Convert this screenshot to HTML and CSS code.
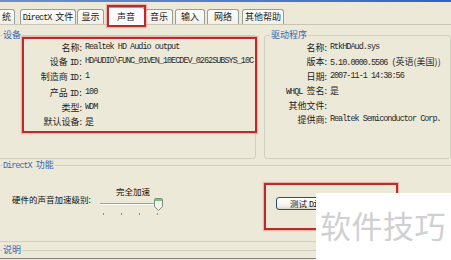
FILE: index.html
```html
<!DOCTYPE html>
<html lang="zh-CN">
<head>
<meta charset="utf-8">
<title>DirectX 诊断工具 - 声音</title>
<link rel="stylesheet" href="styles.css">
</head>
<body>
<div class="topbar"></div>
<div class="tabs">
  <div class="tab t1">统</div>
  <div class="tab t2"><span class="lat sp">DirectX</span>文件</div>
  <div class="tab t3">显示</div>
  <div class="tab sel t4">声音</div>
  <div class="tab t5">音乐</div>
  <div class="tab t6">输入</div>
  <div class="tab t7">网络</div>
  <div class="tab t8">其他帮助</div>
</div>
<div class="pane">
  <div class="groups">
    <section class="group dev">
      <div class="gtitle">设备</div>
      <dl class="rows">
        <dt>名称:</dt><dd class="lat">Realtek HD Audio output</dd>
        <dt>设备 <span class="lat">ID:</span></dt><dd class="lat">HDAUDIO\FUNC_01VEN_10ECDEV_0262SUBSYS_10C</dd>
        <dt>制造商 <span class="lat">ID:</span></dt><dd class="lat">1</dd>
        <dt>产品 <span class="lat">ID:</span></dt><dd class="lat">100</dd>
        <dt>类型:</dt><dd class="lat">WDM</dd>
        <dt>默认设备:</dt><dd>是</dd>
      </dl>
    </section>
    <section class="group drv">
      <div class="gtitle">驱动程序</div>
      <dl class="rows">
        <dt>名称:</dt><dd class="lat">RtkHDAud.sys</dd>
        <dt>版本:</dt><dd><span class="lat">5.10.0000.5506 (</span>英语(美国))</dd>
        <dt>日期:</dt><dd class="lat">2007-11-1 14:38:56</dd>
        <dt><span class="lat sp">WHQL</span>签名:</dt><dd>是</dd>
        <dt>其他文件:</dt><dd></dd>
        <dt>提供商:</dt><dd class="lat">Realtek Semiconductor Corp.</dd>
      </dl>
    </section>
  </div>
  <section class="group dx">
    <div class="gtitle"><span class="lat sp">DirectX</span>功能</div>
    <div class="dx-body">
      <div class="hw-label">硬件的声音加速级别:</div>
      <div class="slider-block">
        <div class="slider-cap">完全加速</div>
        <div class="track"></div>
        <svg class="thumb" width="9" height="13" viewBox="0 0 9 13">
          <path d="M0.5 1.5 Q0.5 0.5 1.5 0.5 H7.5 Q8.5 0.5 8.5 1.5 V8.5 L4.5 12.5 L0.5 8.5 Z" fill="#F3F3EE" stroke="#7F8A80"/>
          <rect x="1" y="1" width="7" height="2" fill="#6FCB6A"/>
        </svg>
        <div class="ticks"><i></i><i></i><i></i><i></i></div>
      </div>
      <button class="btn">测试 <span class="lat">DirectSound(T)</span></button>
    </div>
  </section>
  <section class="group notes">
    <div class="gtitle">说明</div>
    <div class="notebox"></div>
  </section>
</div>
<div class="mark mark-tab"></div>
<div class="mark mark-dev"></div>
<div class="mark mark-btn"></div>
<div class="watermark">软件技巧</div>
</body>
</html>
```
FILE: styles.css
```css
* { box-sizing: border-box; }
html, body { margin: 0; padding: 0; }
html { overflow: hidden; }
body {
  width: 451px;
  height: 260px;
  overflow: hidden;
  position: relative;
  background: #ECE9D8;
  font-family: "Noto Sans CJK SC", "Liberation Sans", sans-serif;
  font-size: 9px;
  color: #1E1E1E;
}
.lat {
  font-family: "Liberation Mono", "Noto Sans CJK SC", monospace;
  font-size: 8.5px;
  letter-spacing: -1px;
}
.lat.sp { margin-right: 4px; }
.topbar {
  height: 2px;
  background: linear-gradient(90deg, #6F8FC8, #4A74C4 70%, #3060C0);
}
.tabs {
  display: flex;
  align-items: flex-end;
  margin-top: 4px;
  height: 19px;
  border-bottom: 1px solid #C9C6B6;
}
.tab {
  height: 15px;
  line-height: 14px;
  text-align: center;
  white-space: nowrap;
  border: 1px solid #9A9E9A;
  border-bottom: none;
  border-radius: 3px 3px 0 0;
  background: linear-gradient(#FDFDFB, #F1EFE6);
  color: #222;
}
.tab.sel {
  height: 18px;
  background: #FCFCFE;
  margin-bottom: -1px;
  line-height: 17px;
}
.t1 { margin-left: -10px; width: 25px; text-align: right; padding-right: 3px; }
.t2 { margin-left: 5px; width: 56px; }
.t3 { margin-left: 1px; width: 27px; }
.t4 { margin-left: 3px; width: 38px; }
.t5 { margin-left: 0; width: 28px; }
.t6 { margin-left: 2px; width: 30px; }
.t7 { margin-left: 2px; width: 32px; }
.t8 { margin-left: 3px; width: 42px; }

.groups {
  display: flex;
  margin-top: 10px;
}
.group {
  border: 1px solid #D0D0BF;
  border-radius: 3px;
}
.gtitle {
  display: table;
  height: 10px;
  line-height: 10px;
  margin: -6px 0 0 5px;
  padding: 0 1px;
  background: #ECE9D8;
  color: #3A66B0;
}
.dev {
  margin-left: -4px;
  width: 264px;
  height: 124px;
}
.drv {
  margin-left: 8px;
  width: 190px;
  height: 124px;
}
.rows {
  display: grid;
  column-gap: 3px;
  margin: 1px 0 0;
  line-height: 13.5px;
}
.dev .rows { grid-template-columns: 85px 169px; }
.drv .rows { grid-template-columns: 62px 120px; }
.rows dt {
  text-align: right;
  white-space: nowrap;
}
.rows dd {
  margin: 0;
  white-space: nowrap;
  overflow: hidden;
  color: #2A2A2A;
}

.dx {
  margin: 6px 0 0 -4px;
  width: 460px;
  height: 77px;
}
.dx-body {
  display: flex;
  align-items: flex-start;
  padding-top: 15px;
  font-size: 8.5px;
  color: #111;
}
.hw-label {
  margin: 8px 0 0 15px;
  width: 86px;
  line-height: 10px;
  white-space: nowrap;
}
.slider-block {
  position: relative;
  width: 70px;
}
.slider-cap {
  text-align: center;
  line-height: 10px;
}
.track {
  margin: 7px 0 0 2px;
  width: 60px;
  height: 2px;
  border-top: 1px solid #A19F97;
  border-bottom: 1px solid #FFFFFF;
}
.thumb {
  position: absolute;
  left: 56px;
  top: 12px;
}
.ticks {
  display: flex;
  gap: 17px;
  margin: 8px 0 0 5px;
}
.ticks i {
  display: block;
  width: 1px;
  height: 2px;
  background: #8E8E88;
}
.btn {
  margin: 11px 0 0 108px;
  width: 110px;
  height: 13px;
  padding: 0 0 0 13px;
  text-align: left;
  line-height: 11px;
  white-space: nowrap;
  border: 1px solid #2C4C74;
  border-radius: 3px;
  background: linear-gradient(#FFFFFF, #F1F0EA 75%, #D8D4C8);
  font-family: "Noto Sans CJK SC", sans-serif;
  font-size: 8.5px;
  color: #111;
}
.notes {
  margin: 8px 0 0 -4px;
  width: 460px;
  height: 10px;
  border-bottom: none;
  border-radius: 3px 3px 0 0;
}
.notebox {
  margin: 3px 0 0 3px;
  height: 1px;
  border-top: 1px solid #85847C;
}

.mark {
  position: absolute;
  border: 2px solid #BC2A2A;
  box-shadow: 0 0 1px 1px rgba(230, 120, 120, 0.45);
}
.mark-tab { left: 107px; top: 5px; width: 39px; height: 22px; }
.mark-dev { left: 22px; top: 37px; width: 235px; height: 96px; }
.mark-btn { left: 264px; top: 183px; width: 134px; height: 47px; }

.watermark {
  position: absolute;
  left: 316px;
  top: 193px;
  width: 135px;
  height: 67px;
  background: #FFFFFF;
  padding-left: 4px;
  font-size: 31px;
  line-height: 64px;
  letter-spacing: 0.5px;
  color: #D0D0D0;
  white-space: nowrap;
}
```
